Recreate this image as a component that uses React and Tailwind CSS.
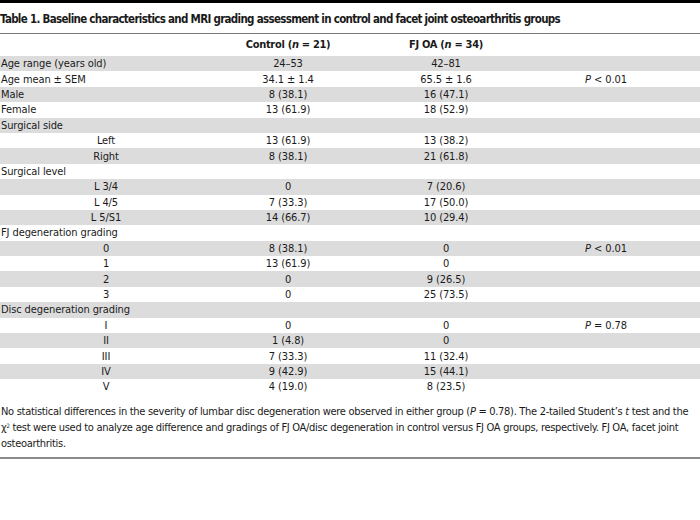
import React from "react";

const rows = [
  { l: "Age range (years old)", c: "24–53", f: "42–81", g: true },
  { l: "Age mean ± SEM", c: "34.1 ± 1.4", f: "65.5 ± 1.6", p: "< 0.01" },
  { l: "Male", c: "8 (38.1)", f: "16 (47.1)", g: true },
  { l: "Female", c: "13 (61.9)", f: "18 (52.9)" },
  { l: "Surgical side", g: true },
  { s: "Left", c: "13 (61.9)", f: "13 (38.2)" },
  { s: "Right", c: "8 (38.1)", f: "21 (61.8)", g: true },
  { l: "Surgical level" },
  { s: "L 3/4", c: "0", f: "7 (20.6)", g: true },
  { s: "L 4/5", c: "7 (33.3)", f: "17 (50.0)" },
  { s: "L 5/S1", c: "14 (66.7)", f: "10 (29.4)", g: true },
  { l: "FJ degeneration grading" },
  { s: "0", c: "8 (38.1)", f: "0", p: "< 0.01", g: true },
  { s: "1", c: "13 (61.9)", f: "0" },
  { s: "2", c: "0", f: "9 (26.5)", g: true },
  { s: "3", c: "0", f: "25 (73.5)" },
  { l: "Disc degeneration grading", g: true },
  { s: "I", c: "0", f: "0", p: "= 0.78" },
  { s: "II", c: "1 (4.8)", f: "0", g: true },
  { s: "III", c: "7 (33.3)", f: "11 (32.4)" },
  { s: "IV", c: "9 (42.9)", f: "15 (44.1)", g: true },
  { s: "V", c: "4 (19.0)", f: "8 (23.5)" },
];

const font = {
  fontFamily:
    '"DejaVu Sans Condensed", "Liberation Sans Narrow", Roboto, sans-serif',
};

export default function App() {
  return (
    <div className="w-[700px] h-[520px] bg-white text-[#1a1a1a]" style={font}>
      <div className="h-[3px] bg-black" />
      <div className="h-[30px] pt-[3px] flex items-center text-[11.5px] tracking-[-0.7px] font-bold leading-none whitespace-nowrap">
        Table 1. Baseline characteristics and MRI grading assessment in control and facet joint osteoarthritis groups
      </div>
      <div className="h-px bg-[#7a7a7a]" />
      <table className="table-fixed border-collapse w-[700px] text-[11px] tracking-[-0.1px]">
        <colgroup>
          <col className="w-[212px]" />
          <col className="w-[152px]" />
          <col className="w-[164px]" />
          <col className="w-[156px]" />
          <col className="w-[16px]" />
        </colgroup>
        <thead>
          <tr className="h-[22px]">
            <th />
            <th className="text-center font-bold tracking-[-0.3px]">
              Control (<i>n</i> = 21)
            </th>
            <th className="text-center font-bold tracking-[-0.3px]">
              FJ OA (<i>n</i> = 34)
            </th>
            <th />
            <th />
          </tr>
        </thead>
        <tbody>
          {rows.map((r, i) => (
            <tr key={i} className={"h-[15.4px] leading-none " + (r.g ? "bg-[#dcdcdc]" : "")}>
              <td className={"p-0 " + (r.s ? "text-center" : "text-left pl-px")}>{r.l || r.s}</td>
              <td className="p-0 text-center">{r.c}</td>
              <td className="p-0 text-center">{r.f}</td>
              <td className="p-0 text-center">
                {r.p && (
                  <>
                    <i>P</i> {r.p}
                  </>
                )}
              </td>
              <td />
            </tr>
          ))}
        </tbody>
      </table>
      <p className="mt-[9px] pl-px text-[11px] tracking-[-0.3px] leading-[16px] whitespace-nowrap">
        No statistical differences in the severity of lumbar disc degeneration were observed in either group (<i>P</i> = 0.78). The 2-tailed Student’s <i>t</i> test and the
        <br />
        χ<sup className="text-[6px]">2</sup> test were used to analyze age difference and gradings of FJ OA/disc degeneration in control versus FJ OA groups, respectively. FJ OA, facet joint
        <br />
        osteoarthritis.
      </p>
      <div className="mt-[5px] h-[2px] bg-[#8a8a8a]" />
    </div>
  );
}
